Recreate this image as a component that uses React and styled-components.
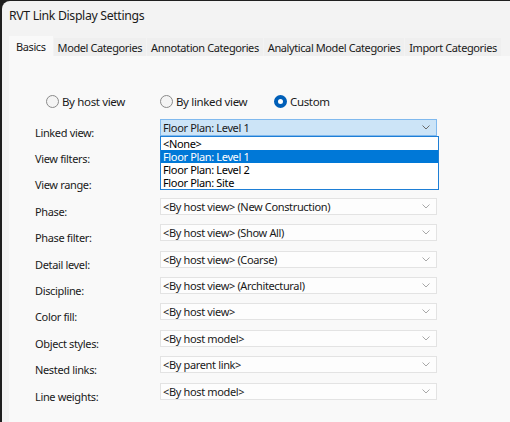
import React from 'react';
import styled, { createGlobalStyle } from 'styled-components';

const Global = createGlobalStyle`
  html, body {
    margin: 0;
    padding: 0;
    background: #1f1f1f;
    overflow: hidden;
  }
  body {
    font-family: "Noto Sans", "Open Sans", sans-serif;
    font-size: 11px;
    letter-spacing: -0.35px;
    color: #1a1a1a;
  }
`;

const Window = styled.div`
  margin: 1px 0 0 2px;
  height: 421px;
  background: #f3f3f3;
  border-top-left-radius: 8px;
  display: flex;
  flex-direction: column;
  overflow: hidden;
`;

const TitleBar = styled.div`
  height: 29px;
  padding-left: 7px;
  display: flex;
  align-items: center;
  font-size: 12.3px;
  letter-spacing: -0.35px;
  color: #1a1a1a;
`;

const TabStrip = styled.div`
  display: flex;
  align-items: flex-end;
  gap: 1px;
  padding: 6px 0 0 7px;
  height: 20px;
`;

const Tab = styled.div`
  height: ${p => (p.$active ? '20px' : '18px')};
  padding: 0 ${p => (p.$active ? '7px' : '4px')};
  display: flex;
  align-items: center;
  background: ${p => (p.$active ? '#f9f9f9' : '#efefef')};
  font-size: 11px;
  letter-spacing: -0.4px;
  white-space: nowrap;
  padding-top: ${p => (p.$active ? '0' : '1px')};
  box-sizing: border-box;
`;

const Panel = styled.div`
  flex: 1;
  margin-left: 7px;
  background: #f9f9f9;
  padding: 37px 0 0 37px;
`;

const RadioRow = styled.div`
  display: grid;
  grid-template-columns: repeat(3, 114px);
  height: 17px;
  align-items: center;
  margin-bottom: 4px;
`;

const Radio = styled.label`
  display: flex;
  align-items: center;
  gap: 3px;
  font-size: 11.5px;
`;

const Circle = styled.span`
  width: 13px;
  height: 13px;
  border-radius: 50%;
  box-sizing: border-box;
  border: ${p => (p.$on ? '4px solid #005fb8' : '1px solid #8a8a8a')};
  background: ${p => (p.$on ? '#ffffff' : '#f4f4f4')};
`;

const Form = styled.div`
  display: grid;
  grid-template-columns: 125px 277px;
  grid-auto-rows: 26.4px;
  margin-left: -11px;
`;

const Label = styled.div`
  font-size: 11px;
  padding-top: 10px;
  display: flex;
  align-items: center;
`;

const Cell = styled.div`
  position: relative;
  display: flex;
  align-items: center;
`;

const Select = styled.div`
  width: 100%;
  height: 17px;
  box-sizing: border-box;
  border: 1px solid ${p => (p.$open ? '#80b9ee' : '#e3e3e3')};
  background: ${p => (p.$open ? '#cce4f7' : '#fdfdfd')};
  display: flex;
  align-items: center;
  justify-content: space-between;
  padding: 0 6px 0 2px;
  font-size: 11px;
  white-space: nowrap;
`;

const List = styled.div`
  position: absolute;
  left: 0;
  top: 22px;
  width: 279px;
  box-sizing: border-box;
  border: 1px solid #1e7fd6;
  background: #ffffff;
  z-index: 2;
`;

const Item = styled.div`
  height: 13px;
  line-height: 13px;
  padding-left: 2px;
  font-size: 11px;
  background: ${p => (p.$sel ? '#0078d7' : 'transparent')};
  color: ${p => (p.$sel ? '#ffffff' : '#000000')};
`;

const Chevron = ({ dark }) => (
  <svg width="8" height="5" viewBox="0 0 8 5">
    <path d="M0.5 0.5 L4 4 L7.5 0.5" fill="none" stroke={dark ? '#6a6a6a' : '#a8a8a8'} strokeWidth="1" />
  </svg>
);

const rows = [
  ['Linked view:', 'Floor Plan: Level 1', true],
  ['View filters:', null],
  ['View range:', null],
  ['Phase:', '<By host view> (New Construction)'],
  ['Phase filter:', '<By host view> (Show All)'],
  ['Detail level:', '<By host view> (Coarse)'],
  ['Discipline:', '<By host view> (Architectural)'],
  ['Color fill:', '<By host view>'],
  ['Object styles:', '<By host model>'],
  ['Nested links:', '<By parent link>'],
  ['Line weights:', '<By host model>'],
];

const options = ['<None>', 'Floor Plan: Level 1', 'Floor Plan: Level 2', 'Floor Plan: Site'];

const tabs = ['Basics', 'Model Categories', 'Annotation Categories', 'Analytical Model Categories', 'Import Categories'];

export default function App() {
  return (
    <>
      <Global />
      <Window>
        <TitleBar>RVT Link Display Settings</TitleBar>
        <TabStrip>
          {tabs.map((t, i) => (
            <Tab key={t} $active={i === 0}>{t}</Tab>
          ))}
        </TabStrip>
        <Panel>
          <RadioRow>
            <Radio><Circle />By host view</Radio>
            <Radio><Circle />By linked view</Radio>
            <Radio><Circle $on />Custom</Radio>
          </RadioRow>
          <Form>
            {rows.map(([label, value, open]) => (
              <React.Fragment key={label}>
                <Label>{label}</Label>
                <Cell>
                  {value && (
                    <Select $open={open}>
                      <span>{value}</span>
                      <Chevron dark={open} />
                    </Select>
                  )}
                  {open && (
                    <List>
                      {options.map(o => (
                        <Item key={o} $sel={o === value}>{o}</Item>
                      ))}
                    </List>
                  )}
                </Cell>
              </React.Fragment>
            ))}
          </Form>
        </Panel>
      </Window>
    </>
  );
}
